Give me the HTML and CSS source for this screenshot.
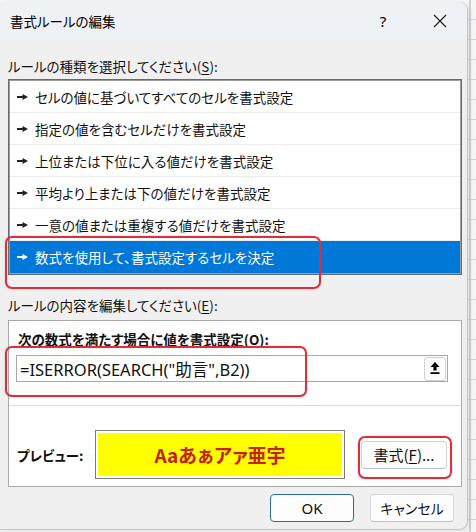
FILE: index.html
```html
<!DOCTYPE html>
<html lang="ja">
<head>
<meta charset="utf-8">
<title>書式ルールの編集</title>
<link rel="stylesheet" href="styles.css">
</head>
<body>
<div class="dialog">
  <div class="titlebar">
    <span class="title">書式ルールの編集</span>
    <span class="help">?</span>
    <span class="close"><svg width="14" height="14" viewBox="0 0 14 14"><path d="M1 1L13 13M13 1L1 13" stroke="#1a1a1a" stroke-width="1.1" fill="none"/></svg></span>
  </div>
  <div class="content">
    <div class="label label-type">ルールの種類を選択してください(<u>S</u>):</div>
    <ul class="rulelist">
      <li class="rule"><svg class="pointer" width="11" height="8" viewBox="0 0 11 8"><path d="M0 3h5.5V1L11 4 5.5 7V5H0z"/></svg><span>セルの値に基づいてすべてのセルを書式設定</span></li>
      <li class="rule"><svg class="pointer" width="11" height="8" viewBox="0 0 11 8"><path d="M0 3h5.5V1L11 4 5.5 7V5H0z"/></svg><span>指定の値を含むセルだけを書式設定</span></li>
      <li class="rule"><svg class="pointer" width="11" height="8" viewBox="0 0 11 8"><path d="M0 3h5.5V1L11 4 5.5 7V5H0z"/></svg><span>上位または下位に入る値だけを書式設定</span></li>
      <li class="rule"><svg class="pointer" width="11" height="8" viewBox="0 0 11 8"><path d="M0 3h5.5V1L11 4 5.5 7V5H0z"/></svg><span>平均より上または下の値だけを書式設定</span></li>
      <li class="rule"><svg class="pointer" width="11" height="8" viewBox="0 0 11 8"><path d="M0 3h5.5V1L11 4 5.5 7V5H0z"/></svg><span>一意の値または重複する値だけを書式設定</span></li>
      <li class="rule selected"><svg class="pointer" width="11" height="8" viewBox="0 0 11 8"><path d="M0 3h5.5V1L11 4 5.5 7V5H0z"/></svg><span>数式を使用して、書式設定するセルを決定</span></li>
    </ul>
    <div class="label label-edit">ルールの内容を編集してください(<u>E</u>):</div>
    <div class="panel">
      <div class="formula-section">
        <div class="bold-label">次の数式を満たす場合に値を書式設定(O):</div>
        <div class="formula-input">
          <span class="formula-text">=ISERROR(SEARCH("助言",B2))</span>
          <span class="collapse-btn"><svg width="10" height="13" viewBox="0 0 10 13"><path d="M5 0L9.5 5H6.6V8.5H3.4V5H0.5z" fill="#000"/><rect x="0.5" y="10.2" width="9" height="1.8" fill="#000"/></svg></span>
        </div>
      </div>
      <div class="sep"></div>
      <div class="preview-row">
        <span class="preview-label">プレビュー:</span>
        <div class="preview-box"><div class="preview-fill">Aaあぁアァ亜宇</div></div>
        <button class="btn format-btn">書式(<u>F</u>)...</button>
      </div>
    </div>
    <div class="actions">
      <button class="btn ok-btn">OK</button>
      <button class="btn">キャンセル</button>
    </div>
  </div>
  <div class="mark mark-rule"></div>
  <div class="mark mark-formula"></div>
  <div class="mark mark-format"></div>
</div>
</body>
</html>
```
FILE: styles.css
```css
html, body {
  margin: 0;
  padding: 0;
}
body {
  width: 476px;
  height: 532px;
  overflow: hidden;
  background-color: #f7f7f7;
  background-image:
    repeating-linear-gradient(to bottom, transparent 0, transparent 19px, #d6d6d6 19px, #d6d6d6 20px),
    linear-gradient(to right, transparent 469px, #d2d2d2 469px, #d2d2d2 471px, transparent 471px);
  font-family: "Noto Sans CJK JP", "Noto Sans", sans-serif;
  font-feature-settings: "palt";
  color: #000;
}
.dialog {
  position: relative;
  margin-top: 2px;
  width: 467px;
  height: 527px;
  background: #f0f0f0;
  border-radius: 0 8px 8px 0;
  box-shadow: 1px 0 0 #c4c4c4, 0 1px 0 #c4c4c4, 2px 2px 6px rgba(0,0,0,0.12);
  display: flex;
  flex-direction: column;
  overflow: hidden;
}
.titlebar {
  height: 38px;
  flex: none;
  background: #eef1f6;
  display: flex;
  align-items: center;
  padding-left: 10px;
  border-radius: 0 8px 0 0;
}
.title {
  font-size: 13.5px;
  flex: 1;
}
.help {
  width: 24px;
  text-align: center;
  font-family: "Noto Sans", sans-serif;
  font-size: 15px;
  margin-right: 22px;
}
.close {
  width: 46px;
  display: flex;
  justify-content: center;
  margin-right: 4px;
}
.content {
  padding: 0 5px 0 8px;
  display: flex;
  flex-direction: column;
}
.label {
  font-size: 13.5px;
  line-height: 20px;
  color: #111;
}
.label u, .btn u {
  text-underline-offset: 2px;
}
.label-type {
  margin-top: 16px;
  margin-bottom: 3px;
}
.rulelist {
  list-style: none;
  margin: 0;
  background: #fff;
  border: 1px solid #6a6a6a;
  box-shadow: inset 0 0 0 1px #9c9c9c;
  padding: 1px;
}
.rule {
  height: 31px;
  border-bottom: 1px solid #ececec;
  display: flex;
  align-items: center;
  padding-left: 7px;
  font-size: 13.5px;
  color: #111;
}
.rule:last-child {
  border-bottom: none;
  height: 32px;
}
.pointer {
  fill: #222;
  margin-right: 7px;
  flex: none;
}
.rule.selected {
  background: #0078d7;
  color: #fff;
}
.rule.selected .pointer {
  fill: #fff;
}
.label-edit {
  margin-top: 20px;
  margin-bottom: 5px;
}
.panel {
  background: #fff;
  border: 1px solid #a9a9a9;
  box-sizing: border-box;
  height: 167px;
  padding-top: 8px;
  display: flex;
  flex-direction: column;
}
.formula-section {
  padding: 0 13px 0 7px;
}
.bold-label {
  font-size: 13.5px;
  font-weight: bold;
  line-height: 20px;
  margin-left: 2px;
  color: #111;
}
.formula-input {
  margin-top: 6px;
  height: 25px;
  border: 1px solid #a8a8a8;
  display: flex;
  align-items: center;
  justify-content: space-between;
  padding: 0 1px 0 3px;
}
.formula-text {
  font-family: "Noto Sans", "Noto Sans CJK JP", sans-serif;
  font-feature-settings: normal;
  font-size: 16.5px;
  color: #111;
}
.collapse-btn {
  width: 20px;
  height: 22px;
  border: 1px solid #d0d0d0;
  border-radius: 3px;
  background: #fbfbfb;
  display: flex;
  align-items: center;
  justify-content: center;
}
.sep {
  height: 1px;
  background: #dadada;
  margin: 23px 1px 0;
}
.preview-row {
  display: flex;
  align-items: center;
  margin-top: 24px;
  padding: 0 13px 0 8px;
}
.preview-label {
  width: 78px;
  font-size: 13.5px;
  font-weight: bold;
  color: #111;
}
.preview-box {
  border: 1px solid #7a7a7a;
  padding: 2px;
  box-sizing: border-box;
  background: #fff;
  width: 250px;
  height: 49px;
}
.preview-fill {
  height: 100%;
  background: #ffff00;
  display: flex;
  align-items: center;
  justify-content: center;
  font-size: 19px;
  font-weight: bold;
  color: #c42200;
}
.btn {
  font-family: "Noto Sans CJK JP", "Noto Sans", sans-serif;
  font-feature-settings: "palt";
  font-size: 14px;
  color: #111;
  background: #fdfdfd;
  border: 1px solid #d4d4d4;
  border-bottom-color: #c0c0c0;
  border-radius: 4px;
  height: 28px;
  width: 84px;
  padding: 0;
}
.format-btn {
  margin-left: 16px;
  width: 86px;
  font-size: 15px;
}
.actions {
  display: flex;
  justify-content: flex-end;
  gap: 16px;
  margin-top: 7px;
  padding-right: 8px;
}
.ok-btn {
  border: 1px solid #2b6d8c;
  font-family: "Noto Sans", sans-serif;
  font-size: 15px;
}
.mark {
  position: absolute;
  border: 2px solid #d8313b;
  border-radius: 7px;
  box-shadow: 0 0 2px rgba(216, 49, 59, 0.35);
  box-sizing: border-box;
  pointer-events: none;
}
.mark-rule {
  left: 5px;
  top: 234px;
  width: 316px;
  height: 53px;
}
.mark-formula {
  left: 5px;
  top: 344px;
  width: 302px;
  height: 51px;
}
.mark-format {
  left: 358px;
  top: 434px;
  width: 94px;
  height: 43px;
}
```
